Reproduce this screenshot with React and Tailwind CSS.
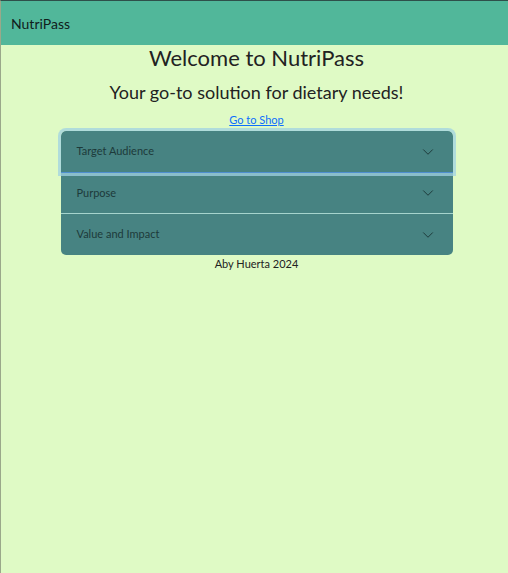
import React from 'react'
import { ChevronDown } from 'lucide-react'

const items = ['Target Audience', 'Purpose', 'Value and Impact']

export default function App() {
    return (
        <div className="min-h-[573px] bg-[#dffac5] border-l border-l-[#9aa88a] border-t border-t-[#2e4f4a] text-[#222] font-['Lato',sans-serif]">
            {/* Header */}
            <div className="h-[44px] bg-[#51b79a] flex items-center px-[10px]">
                <span className="text-[14px] text-[#10201c]">NutriPass</span>
            </div>

            <div className="flex flex-col items-center pl-[4px]">
                <h1 className="text-[22px] leading-[26px] text-[#222]">Welcome to NutriPass</h1>
                <h2 className="text-[18px] leading-[22px] mt-[10px] text-[#222]">Your go-to solution for dietary needs!</h2>
                <a href="#" className="text-[11px] leading-[14px] mt-[10px] text-[#0d6efd] underline">Go to Shop</a>

                {/* Accordion */}
                <div className="w-[392px] mt-[4px] rounded-[5px] bg-[#478382]">
                    {items.map((label, i) => (
                        <button
                            key={label}
                            className={`w-full flex items-center justify-between pl-[16px] pr-[16px] text-left text-[11px] text-[#1d3a3a] ${i === 0 ? 'h-[42px] rounded-t-[5px] border-b border-b-[#4f8fcf] shadow-[0_0_0_3px_rgba(160,210,225,0.75)] relative z-10' : 'h-[41px]'} ${i === 1 ? 'border-b border-b-[#a6d4cd]' : ''}`}
                        >
                            <span>{label}</span>
                            <ChevronDown className="w-[18px] h-[18px] text-[#1d3a3a]" strokeWidth={1.3} />
                        </button>
                    ))}
                </div>

                <p className="text-[11px] leading-[14px] mt-[2px] text-[#222]">Aby Huerta 2024</p>
            </div>
        </div>
    )
}
